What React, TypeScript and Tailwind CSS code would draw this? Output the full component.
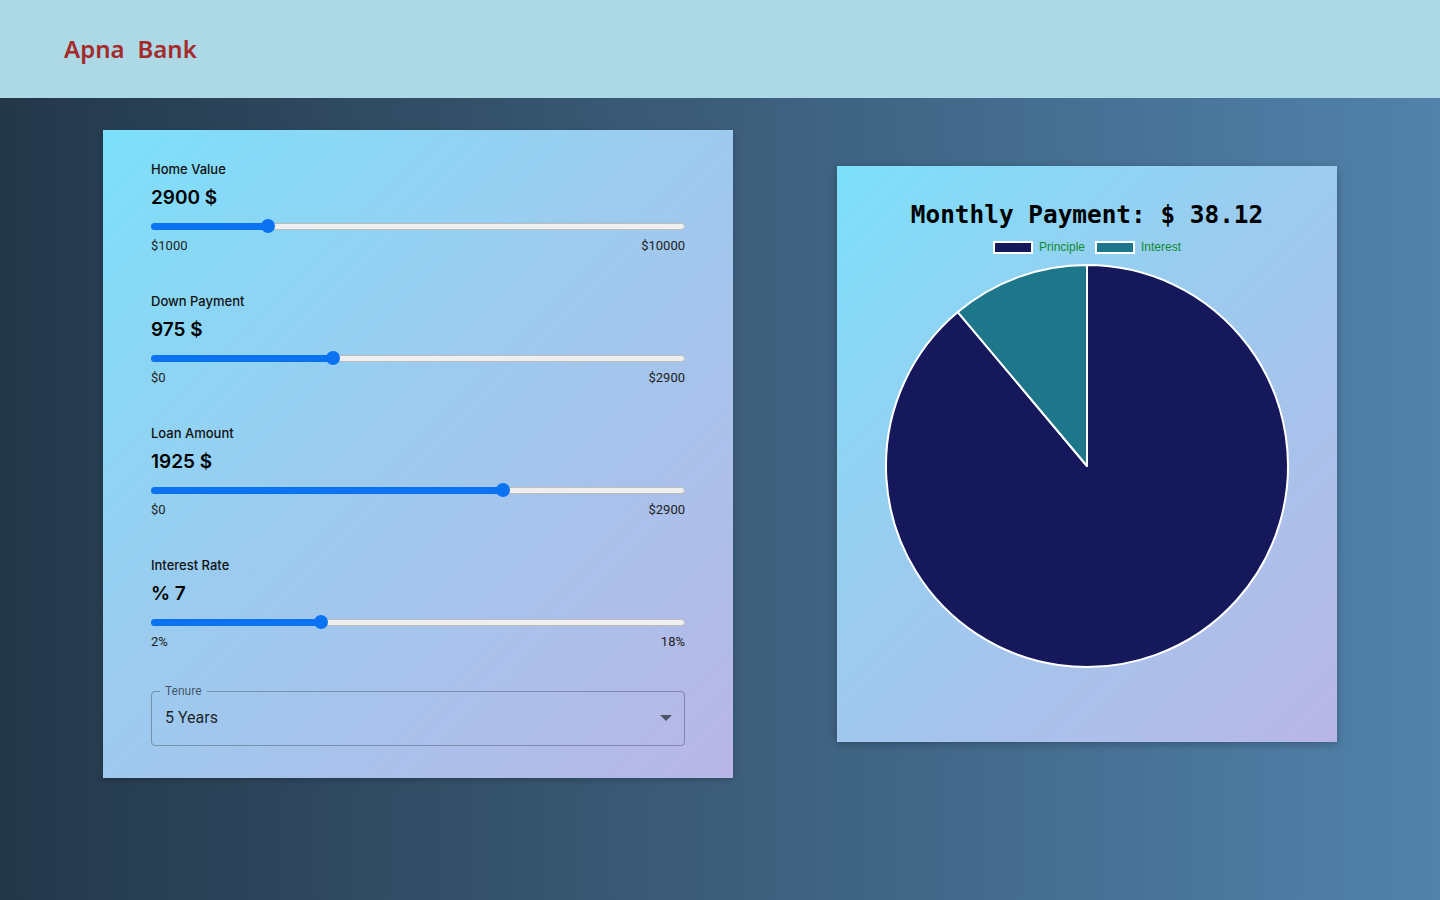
import React from "react";

type SliderProps = {
  label: string;
  value: string;
  frac: number;
  min: string;
  max: string;
};

const TRACK = 534;
const THUMB = 14;

function RangeRow({ label, value, frac, min, max }: SliderProps) {
  const center = THUMB / 2 + frac * (TRACK - THUMB);
  return (
    <div className="flex flex-col">
      <div className="h-4 text-[13px] leading-4 font-medium text-[#111] [font-family:Inter,'Noto_Sans',sans-serif]">{label}</div>
      <div className="mt-[7px] h-7 text-[19px] leading-7 font-semibold text-black [font-family:Inter,'Noto_Sans',sans-serif]">{value}</div>
      <div className="relative mt-[7px] h-[14px] w-[534px]">
        <div className="absolute left-0 right-0 top-[4px] h-[7px] rounded-full border border-[#bcbcbc] bg-[#efefef]" />
        <div className="absolute left-0 top-[4px] h-[7px] rounded-full bg-[#0b72f2]" style={{ width: center }} />
        <div
          className="absolute top-0 h-[14px] w-[14px] rounded-full bg-[#0b72f2]"
          style={{ left: center - THUMB / 2 }}
        />
      </div>
      <div className="mt-[5px] flex h-4 justify-between text-[13px] leading-4 text-[#222] [font-family:Roboto,sans-serif]">
        <span>{min}</span>
        <span>{max}</span>
      </div>
    </div>
  );
}

function Tenure() {
  return (
    <div className="relative mt-10 h-14 w-[534px]">
      <fieldset className="absolute inset-0 -top-[5px] rounded border border-[rgba(0,0,0,0.28)] px-2">
        <legend className="px-[5px] text-[12px] leading-3 text-[rgba(0,0,0,0.6)] [font-family:Roboto,sans-serif]">Tenure</legend>
      </fieldset>
      <div className="flex h-full items-center justify-between pl-[14px] pr-[13px]">
        <span className="text-[16px] text-[rgba(0,0,0,0.85)] [font-family:Roboto,sans-serif]">5 Years</span>
        <svg width="12" height="6" viewBox="0 0 10 5">
          <path d="M0 0 L5 5 L10 0 Z" fill="rgba(0,0,0,0.55)" />
        </svg>
      </div>
    </div>
  );
}

function Pie() {
  const cx = 203;
  const cy = 203;
  const r = 201;
  const a = (40 * Math.PI) / 180;
  const px = cx - r * Math.sin(a);
  const py = cy - r * Math.cos(a);
  return (
    <svg width="406" height="406" viewBox="0 0 406 406" className="mt-[8px]">
      <path
        d={`M${cx} ${cy} L${cx} ${cy - r} A${r} ${r} 0 1 1 ${px} ${py} Z`}
        fill="#15185b"
        stroke="#fff"
        strokeWidth="2"
        strokeLinejoin="round"
      />
      <path
        d={`M${cx} ${cy} L${px} ${py} A${r} ${r} 0 0 1 ${cx} ${cy - r} Z`}
        fill="#1d7689"
        stroke="#fff"
        strokeWidth="2"
        strokeLinejoin="round"
      />
    </svg>
  );
}

export default function App() {
  return (
    <div className="min-h-screen w-full">
      <header className="flex h-[98px] items-center bg-[#add8e6] pl-16">
        <div className="flex gap-[13px] text-[24px] font-semibold text-[#a52a2a] [font-family:'Noto_Sans',sans-serif]">
          <span>Apna</span>
          <span>Bank</span>
        </div>
      </header>

      <main className="flex h-[802px] items-start gap-[104px] bg-[linear-gradient(90deg,#233749_0%,#3a5a76_45%,#5182ab_100%)] pt-8 pl-[103px]">
        <section className="flex w-[630px] flex-col bg-[linear-gradient(135deg,#7ce0fa_0%,#9ccbef_45%,#b9b6e6_100%)] px-12 pt-[31px] pb-8 shadow-[0_2px_6px_rgba(0,0,0,0.2)]">
          <div className="flex flex-col gap-[39px]">
            <RangeRow label="Home Value" value="2900 $" frac={1900 / 9000} min="$1000" max="$10000" />
            <RangeRow label="Down Payment" value="975 $" frac={975 / 2900} min="$0" max="$2900" />
            <RangeRow label="Loan Amount" value="1925 $" frac={1925 / 2900} min="$0" max="$2900" />
            <RangeRow label="Interest Rate" value="% 7" frac={5 / 16} min="2%" max="18%" />
          </div>
          <Tenure />
        </section>

        <section className="mt-9 flex w-[500px] flex-col items-center bg-[linear-gradient(135deg,#7ce0fa_0%,#9ccbef_45%,#b9b6e6_100%)] pt-[33px] pb-[73px] shadow-[0_2px_8px_rgba(0,0,0,0.25)]">
          <h2 className="h-8 text-[24.4px] leading-8 font-bold text-black [font-family:'DejaVu_Sans_Mono',monospace]">
            Monthly Payment: $ 38.12
          </h2>
          <div className="mt-2 flex h-4 items-center text-[12px] text-[#128a30] [font-family:'Liberation_Sans',Arial,sans-serif]">
            <span className="h-[13px] w-10 border-2 border-white bg-[#15185b]" />
            <span className="ml-[6px]">Principle</span>
            <span className="ml-[10px] h-[13px] w-10 border-2 border-white bg-[#1d7689]" />
            <span className="ml-[6px]">Interest</span>
          </div>
          <Pie />
        </section>
      </main>
    </div>
  );
}
